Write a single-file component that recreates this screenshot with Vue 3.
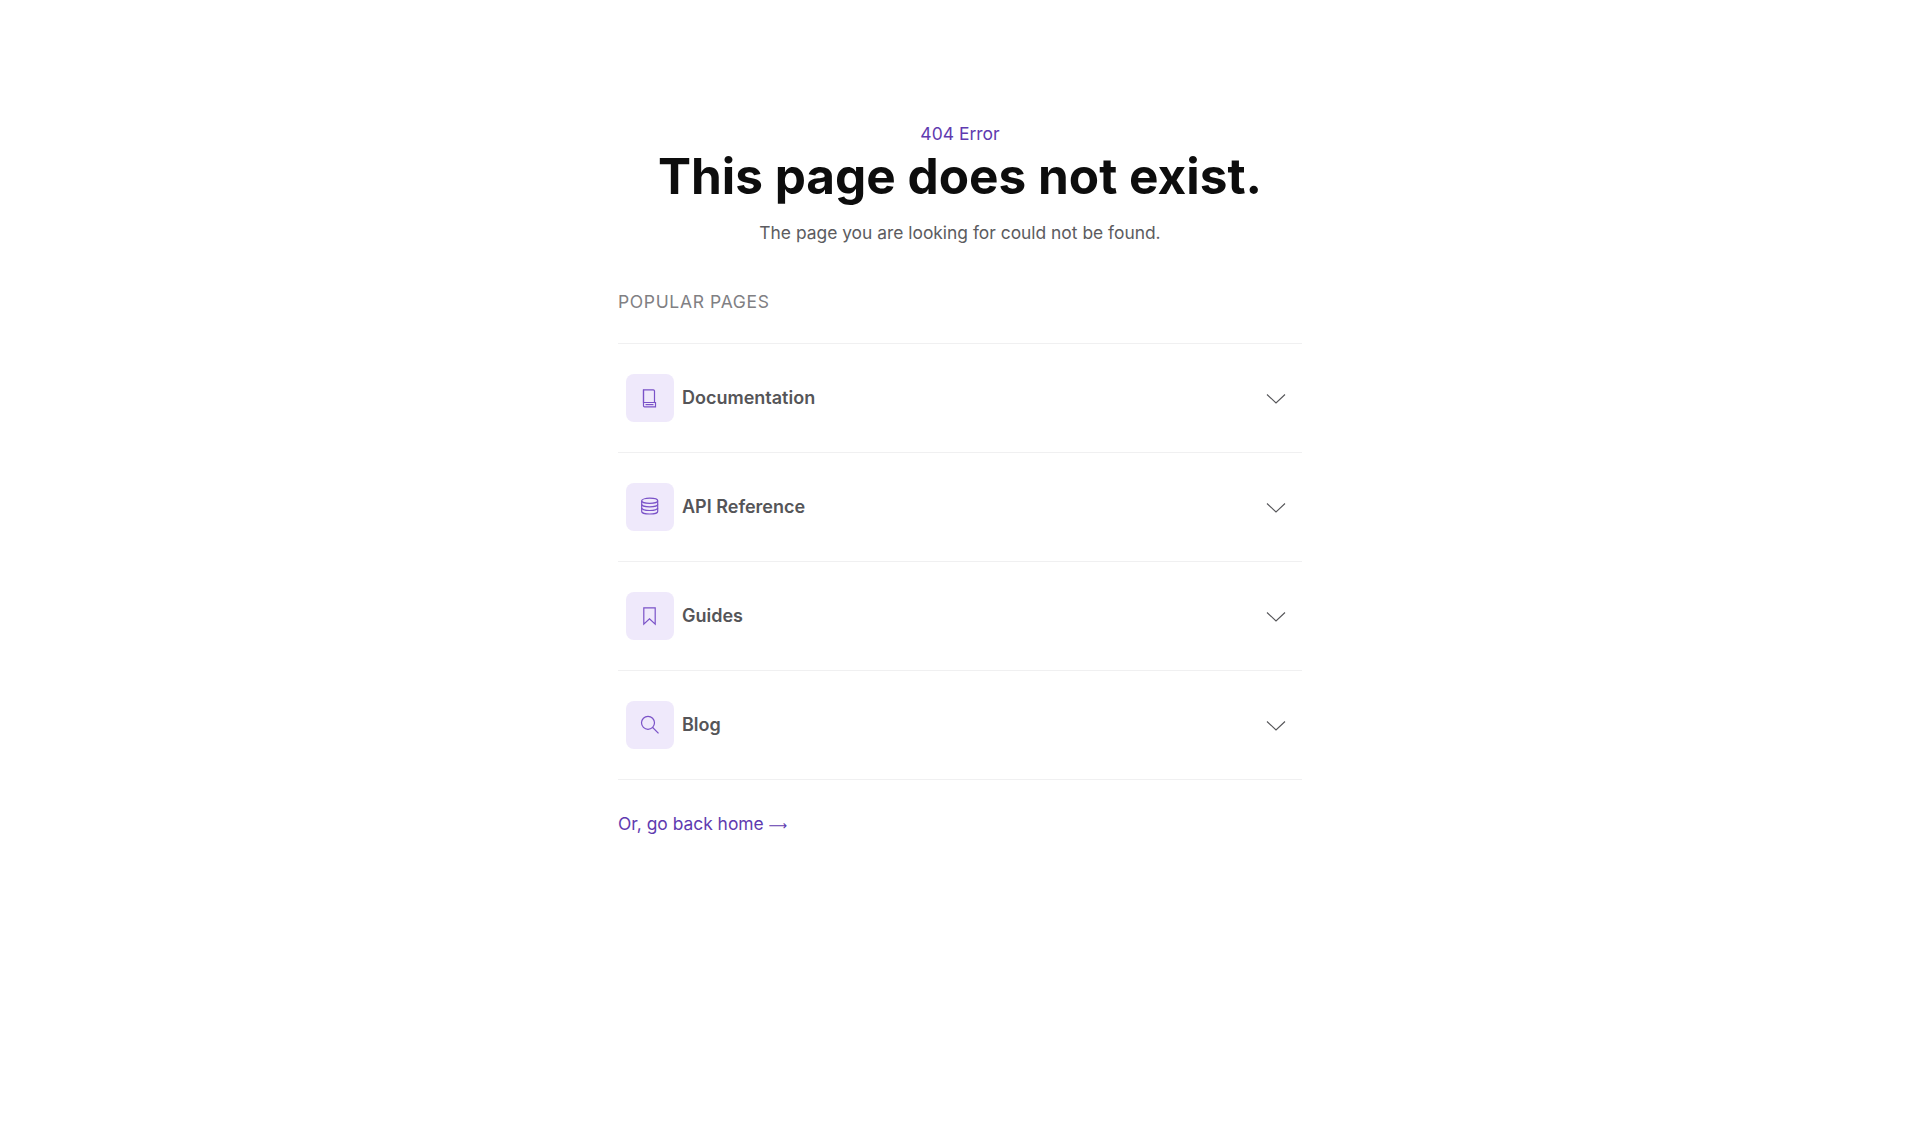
<script setup>
const links = [
  { title: "Documentation", icon: "book" },
  { title: "API Reference", icon: "db" },
  { title: "Guides", icon: "bookmark" },
  { title: "Blog", icon: "search" },
];
</script>

<template>
  <main class="page">
    <div class="content">
      <header class="head">
        <p class="eyebrow">404 Error</p>
        <h1 class="title">This page does not exist.</h1>
        <p class="sub">The page you are looking for could not be found.</p>
      </header>

      <h2 class="label">POPULAR PAGES</h2>

      <ul class="list">
        <li v-for="link in links" :key="link.title" class="row">
          <span class="icon-box">
            <svg width="24" height="24" viewBox="0 0 24 24" fill="none" stroke="currentColor" stroke-width="1.2">
              <template v-if="link.icon === 'book'">
                <path d="M5.500 17V3.800h9.800c.7 0 1.200.5 1.200 1.200v12" />
                <path d="M5.500 3.800v16c0 .6.400 1 1 1h11v-4.300h-12" />
                <path d="M7.500 18.600h8" />
              </template>
              <template v-else-if="link.icon === 'db'">
                <ellipse cx="11.700" cy="5.800" rx="8" ry="2.600" />
                <path d="M3.700 5.800v10.600c0 1.400 3.600 2.600 8 2.600s8-1.200 8-2.600V5.800" />
                <path d="M3.700 9.300c0 1.400 3.600 2.600 8 2.600s8-1.200 8-2.600" />
                <path d="M3.700 12.900c0 1.400 3.600 2.600 8 2.600s8-1.200 8-2.600" />
              </template>
              <template v-else-if="link.icon === 'bookmark'">
                <path d="M5.800 3.800h11.400v16.400L11.500 14.800l-5.700 5.400z" />
              </template>
              <template v-else>
                <circle cx="10" cy="9.800" r="6.500" />
                <path d="M14.700 14.500L20.500 20.300" />
              </template>
            </svg>
          </span>
          <span class="row-title">{{ link.title }}</span>
          <svg class="chevron" width="20" height="12" viewBox="0 0 20 12" fill="none" stroke="currentColor" stroke-width="1.1">
            <path d="M1 1.500L10 10l9-8.500" />
          </svg>
        </li>
      </ul>

      <a class="back" href="#">Or, go back home <span class="arrow">⟶</span></a>
    </div>
  </main>
</template>

<style>
body {
  margin: 0;
  background: #fff;
}
</style>

<style scoped>
.page {
  min-height: 1140px;
  box-sizing: border-box;
  display: flex;
  justify-content: center;
  padding-top: 120px;
  font-family: "Inter", "Noto Sans", sans-serif;
}

.content {
  width: 684px;
}

.head {
  text-align: center;
}

.eyebrow {
  margin: 0;
  font-size: 17.5px;
  line-height: 28px;
  color: #5f3bb0;
}

.title {
  margin: 0;
  font-size: 49.5px;
  line-height: 56px;
  font-weight: 700;
  color: #0d0d0d;
}

.sub {
  margin: 15px 0 0;
  font-size: 17.4px;
  line-height: 28px;
  color: #5c5c60;
}

.label {
  margin: 41px 0 0;
  font-size: 17.5px;
  line-height: 28px;
  font-weight: 400;
  letter-spacing: 0.65px;
  color: #808083;
}

.list {
  list-style: none;
  margin: 27px 0 0;
  padding: 0;
  border-top: 1px solid #f0f0f1;
}

.row {
  height: 108px;
  display: flex;
  align-items: center;
  gap: 8px;
  padding: 0 16px 0 8px;
  border-bottom: 1px solid #f0f0f1;
}

.icon-box {
  width: 48px;
  height: 48px;
  border-radius: 8px;
  background: #efe9fb;
  color: #7a52c8;
  display: flex;
  align-items: center;
  justify-content: center;
}

.row-title {
  flex: 1;
  font-size: 18px;
  line-height: 24px;
  font-weight: 600;
  color: #555558;
  margin-top: -1px;
}

.chevron {
  color: #555558;
  margin-top: 1px;
}

.back {
  display: block;
  margin-top: 30px;
  font-size: 17.4px;
  line-height: 28px;
  color: #5f3bb0;
  text-decoration: none;
}

.arrow {
  font-family: "DejaVu Sans", sans-serif;
  font-size: 13px;
}
</style>
